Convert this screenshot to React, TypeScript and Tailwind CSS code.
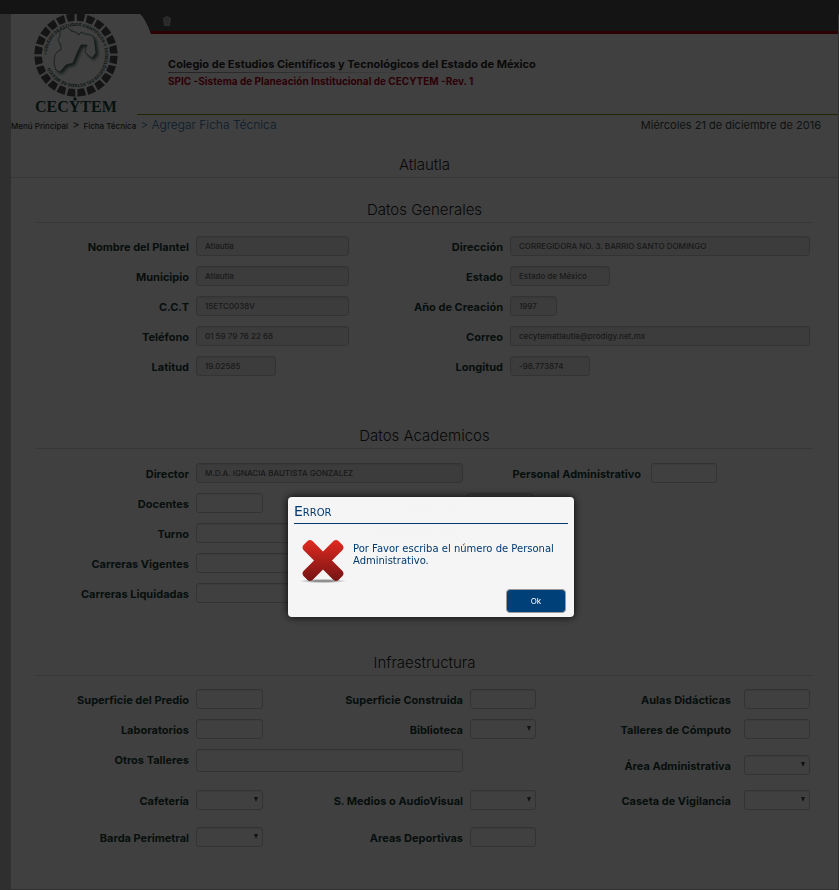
import type { ReactNode } from "react";

const inputBase =
  "block h-5 rounded-[3px] border border-[#ccc] px-2 text-[8px] leading-none font-medium text-[#666] shadow-[inset_0_1px_1px_rgba(0,0,0,0.08)]";

function Label({ id, gap = "pr-[7px]", children }: { id: string; gap?: string; children: ReactNode }) {
  return (
    <label
      htmlFor={id}
      className={`block pt-[2px] text-right text-[11px] leading-[18px] font-bold whitespace-nowrap text-[#183c34] ${gap}`}
    >
      {children}
    </label>
  );
}

function ReadOnly({ id, value, width }: { id: string; value: string; width: string }) {
  return <input id={id} readOnly value={value} className={`${inputBase} bg-[#eee] ${width}`} />;
}

function TextBox({ id, width = "w-[67px]" }: { id: string; width?: string }) {
  return <input id={id} className={`${inputBase} bg-white ${width}`} />;
}

function Select({ id, width = "w-[67px]" }: { id: string; width?: string }) {
  return (
    <div className={`relative ${width}`}>
      <select id={id} className={`${inputBase} w-full appearance-none bg-white`}>
        <option value=""></option>
      </select>
      <svg viewBox="0 0 4 5" className="pointer-events-none absolute top-[7px] right-[5px] h-[5px] w-1" aria-hidden="true">
        <path d="M0 0h4L2 5z" fill="#444" />
      </svg>
    </div>
  );
}

function SectionTitle({ children }: { children: ReactNode }) {
  return (
    <h2 className="h-6 border-b border-[#dcdcdc] text-center text-[15px] leading-[22px] font-light text-[#222]">
      {children}
    </h2>
  );
}

function Logo() {
  const blocks = Array.from({ length: 24 }, (_, i) => i * 15 + 7);
  return (
    <svg viewBox="0 0 96 102" className="h-[102px] w-24 shrink-0" role="img" aria-label="CECYTEM">
      <defs>
        <path id="ring" d="M19 41a29 29 0 1 1 58 0a29 29 0 1 1 -58 0" />
        <filter id="soft" x="-20%" y="-20%" width="150%" height="150%">
          <feDropShadow dx="2" dy="2" stdDeviation="1.5" floodColor="#18483c" floodOpacity="0.8" />
        </filter>
      </defs>
      {blocks.map((angle) => (
        <path
          key={angle}
          d="M44.300 -0.500h7.400q.7 0 .6 .7l-.9 6q-.1 .8-.9 .8h-5q-.8 0-.9-.8l-.9-6q-.1-.7 .6-.7z"
          fill="#505050"
          transform={`rotate(${angle} 48 41)`}
        />
      ))}
      <text fontSize="4.200" fontWeight="700" fill="#184c40" fontFamily="Inter, sans-serif">
        <textPath href="#ring">• COLEGIO DE ESTUDIOS CIENTÍFICOS Y TECNOLÓGICOS DEL ESTADO DE MÉXICO</textPath>
      </text>
      <path
        d="M39 13L43 17L47 18L51 21L53 18L57 20L63 21L66 24L67 31L68 39L64 44L60 41L57 38L59 31L53 31L50 37L47 44L45 49L38 51L32 58L28 56L26 49L27 41L30 37L33 36L33 31L30 26L32 22L32 16L36 15Z"
        fill="#fff"
        stroke="#3c6058"
        strokeWidth="0.700"
        strokeLinejoin="round"
        filter="url(#soft)"
      />
      <text x="7" y="98" fontSize="16" fontWeight="700" fill="#18483c" fontFamily="Liberation Serif, serif">
        CECYTEM
      </text>
      <circle cx="47" cy="85" r="1.700" fill="#18483c" />
    </svg>
  );
}

function Header() {
  return (
    <header className="flex h-[101px]">
      <div className="w-[126px] pl-[17px]">
        <Logo />
      </div>
      <div className="relative flex-1 border-b border-[#809c00]">
        <div className="h-5 border-b-[3px] border-[#b4000c] bg-[#505050] pl-[25px]">
          <svg viewBox="0 0 50 14" className="h-[14px] w-[50px]" aria-hidden="true">
            <path d="M1 4l2-1 2-1 2 1 2 1-1 8H2z" fill="#b0b0b0" />
            <path d="M3 5h4M4 7l2 3" stroke="#888" />
            <path d="M12 8h18M12 11h28" stroke="#5c5c5c" />
          </svg>
        </div>
        <svg viewBox="0 0 18 20" className="absolute top-0 left-0 h-5 w-[18px]" aria-hidden="true">
          <path d="M0 0h3q5 4 11 20H0z" fill="#fff" />
        </svg>
        <div className="pt-[23px] pl-[31px]">
          <h1 className="text-[11px] leading-[15px] font-bold text-[#282828]">
            Colegio de Estudios Científicos y Tecnológicos del Estado de México
          </h1>
          <div className="h-px w-[270px] bg-linear-to-r from-[#888] to-white" />
          <p className="text-[10px] leading-[17px] font-bold text-[#b40018]">
            SPIC -Sistema de Planeación Institucional de CECYTEM -Rev. 1
          </p>
        </div>
      </div>
    </header>
  );
}

function General() {
  return (
    <section>
      <SectionTitle>Datos Generales</SectionTitle>
      <div className="mt-[13px] grid grid-cols-[160fr_154fr_160fr_303fr] gap-y-[10px]">
        <Label id="nombre">Nombre del Plantel</Label>
        <ReadOnly id="nombre" value="Atlautla" width="w-[153px]" />
        <Label id="direccion">Dirección</Label>
        <ReadOnly id="direccion" value="CORREGIDORA NO. 3. BARRIO SANTO DOMINGO" width="w-[300px]" />
        <Label id="municipio">Municipio</Label>
        <ReadOnly id="municipio" value="Atlautla" width="w-[153px]" />
        <Label id="estado">Estado</Label>
        <ReadOnly id="estado" value="Estado de México" width="w-[100px]" />
        <Label id="cct">C.C.T</Label>
        <ReadOnly id="cct" value="15ETC0038V" width="w-[153px]" />
        <Label id="creacion">Año de Creación</Label>
        <ReadOnly id="creacion" value="1997" width="w-[47px]" />
        <Label id="telefono">Teléfono</Label>
        <ReadOnly id="telefono" value="01 59 79 76 22 68" width="w-[153px]" />
        <Label id="correo">Correo</Label>
        <ReadOnly id="correo" value="cecytematlautla@prodigy.net.mx" width="w-[300px]" />
        <Label id="latitud">Latitud</Label>
        <ReadOnly id="latitud" value="19.02585" width="w-20" />
        <Label id="longitud">Longitud</Label>
        <ReadOnly id="longitud" value="-98.773874" width="w-20" />
      </div>
    </section>
  );
}

function Academic() {
  return (
    <section className="mt-[49px]">
      <SectionTitle>Datos Academicos</SectionTitle>
      <div className="mt-[14px] flex flex-col gap-[10px]">
        <div className="grid grid-cols-[160fr_267fr_188fr_162fr]">
          <Label id="director">Director</Label>
          <ReadOnly id="director" value="M.D.A. IGNACIA BAUTISTA GONZALEZ" width="w-[267px]" />
          <Label id="personal" gap="pr-[10px]">Personal Administrativo</Label>
          <TextBox id="personal" width="w-[66px]" />
        </div>
        <div className="grid grid-cols-[160fr_154fr_117fr_346fr]">
          <Label id="docentes">Docentes</Label>
          <TextBox id="docentes" />
          <Label id="matricula">Matrícula</Label>
          <TextBox id="matricula" width="w-[66px]" />
        </div>
        <div className="grid grid-cols-[160fr_154fr_117fr_346fr]">
          <Label id="turno">Turno</Label>
          <Select id="turno" width="w-[153px]" />
          <Label id="periodo">Período Escolar</Label>
          <TextBox id="periodo" width="w-[66px]" />
        </div>
        <div className="grid grid-cols-[160fr_617fr]">
          <Label id="vigentes">Carreras Vigentes</Label>
          <TextBox id="vigentes" width="w-[333px]" />
        </div>
        <div className="grid grid-cols-[160fr_617fr]">
          <Label id="liquidadas">Carreras Liquidadas</Label>
          <TextBox id="liquidadas" width="w-[333px]" />
        </div>
      </div>
    </section>
  );
}

function Infrastructure() {
  const row = "grid grid-cols-[160fr_114fr_160fr_102fr_172fr_69fr]";
  return (
    <section className="mt-[49px]">
      <SectionTitle>Infraestructura</SectionTitle>
      <div className="mt-[13px]">
        <div className={row}>
          <Label id="predio">Superficie del Predio</Label>
          <TextBox id="predio" />
          <Label id="construida">Superficie Construida</Label>
          <TextBox id="construida" width="w-[66px]" />
          <Label id="aulas" gap="pr-[13px]">Aulas Didácticas</Label>
          <TextBox id="aulas" width="w-[66px]" />
        </div>
        <div className={`mt-[10px] ${row}`}>
          <Label id="laboratorios">Laboratorios</Label>
          <TextBox id="laboratorios" />
          <Label id="biblioteca">Biblioteca</Label>
          <Select id="biblioteca" width="w-[66px]" />
          <Label id="computo" gap="pr-[13px]">Talleres de Cómputo</Label>
          <TextBox id="computo" width="w-[66px]" />
        </div>
        <div className="mt-[10px] grid grid-cols-[160fr_376fr_172fr_69fr]">
          <Label id="otros">Otros Talleres</Label>
          <textarea
            id="otros"
            className="block h-[23px] w-[267px] resize-none rounded-[3px] border border-[#ccc] bg-white px-2 text-[8px] shadow-[inset_0_1px_1px_rgba(0,0,0,0.08)]"
          />
          <div className="pt-[6px]">
            <Label id="area" gap="pr-[13px]">Área Administrativa</Label>
          </div>
          <div className="pt-[6px]">
            <Select id="area" width="w-[66px]" />
          </div>
        </div>
        <div className={`mt-[15px] ${row}`}>
          <Label id="cafeteria">Cafetería</Label>
          <Select id="cafeteria" />
          <Label id="medios">S. Medios o AudioVisual</Label>
          <Select id="medios" width="w-[66px]" />
          <Label id="caseta" gap="pr-[13px]">Caseta de Vigilancia</Label>
          <Select id="caseta" width="w-[66px]" />
        </div>
        <div className={`mt-[17px] ${row}`}>
          <Label id="barda">Barda Perimetral</Label>
          <Select id="barda" />
          <Label id="deportivas">Areas Deportivas</Label>
          <TextBox id="deportivas" width="w-[66px]" />
        </div>
      </div>
    </section>
  );
}

function ErrorDialog() {
  return (
    <div className="fixed inset-0 bg-black/75">
      <div
        role="alertdialog"
        aria-labelledby="error-title"
        aria-describedby="error-text"
        className="absolute top-[497px] left-72 w-[286px] rounded-[4px] bg-[#f9f9f9]/98 px-[6px] pt-[5px] pb-1 font-['DejaVu_Sans',sans-serif] text-[#003a70] shadow-[0_0_8px_rgba(0,0,0,0.9)]"
      >
        <h2 id="error-title" className="h-[22px] border-b border-[#003a70] text-[14px] leading-[19px] [font-variant:small-caps]">
          Error
        </h2>
        <div className="flex pt-4">
          <div className="shrink-0 pl-1">
            <svg viewBox="0 0 48 44" className="h-11 w-12" aria-hidden="true">
              <defs>
                <linearGradient id="red" x1="0" y1="0" x2="0" y2="1">
                  <stop offset="0" stopColor="#e02a20" />
                  <stop offset="1" stopColor="#741414" />
                </linearGradient>
                <radialGradient id="shade">
                  <stop offset="0.4" stopColor="#777" stopOpacity="0.8" />
                  <stop offset="1" stopColor="#999" stopOpacity="0" />
                </radialGradient>
              </defs>
              <ellipse cx="25" cy="41" rx="24" ry="2.200" fill="url(#shade)" />
              <path
                d="M9.500 1Q12 -0.800 14.500 1L25 11.500L35.500 1Q38 -0.800 40.500 1L44.500 5Q46.500 7.500 44.500 10L34 20.500L44.500 31Q46.500 33.500 44.500 36L40.500 40Q38 41.800 35.500 40L25 29.500L14.500 40Q12 41.800 9.500 40L5.500 36Q3.500 33.500 5.500 31L16 20.500L5.500 10Q3.500 7.500 5.500 5Z"
                fill="url(#red)"
              />
            </svg>
          </div>
          <p id="error-text" className="flex-1 pt-[3px] pl-[7px] text-[10px] leading-3">
            Por Favor escriba el número de Personal Administrativo.
          </p>
        </div>
        <div className="mt-[5px] flex justify-end pr-[2px]">
          <button className="h-6 w-[60px] rounded-[4px] border border-[#999] bg-[#004078] font-[Inter,sans-serif] text-[8px] text-white">
            Ok
          </button>
        </div>
      </div>
    </div>
  );
}

export default function App() {
  return (
    <div className="flex min-h-screen flex-col bg-[#bcbcbc] font-[Inter,'Liberation_Sans',sans-serif]">
      <div className="h-[14px] bg-[#505050]" />
      <div className="mr-px mb-px ml-[11px] flex-1 bg-white">
        <Header />
        <div className="flex h-5 items-center justify-between pr-[17px] text-[11px]">
          <nav className="flex items-center gap-[4px] text-[#333]">
            <a href="#menu" className="pt-[2px] text-[8px] font-medium">Menú Principal</a>
            <span>&gt;</span>
            <a href="#ficha" className="pt-[2px] text-[8px] font-medium">Ficha Técnica</a>
            <span className="text-[12px] font-light text-[#2870a8]">&gt; Agregar Ficha Técnica</span>
          </nav>
          <time dateTime="2016-12-21" className="text-[#384848]">Miércoles 21 de diciembre de 2016</time>
        </div>
        <div className="mt-[19px]">
          <SectionTitle>Atlautla</SectionTitle>
        </div>
        <main className="mt-[21px] mr-[25px] ml-[25px]">
          <General />
          <Academic />
          <Infrastructure />
        </main>
      </div>
      <ErrorDialog />
    </div>
  );
}
